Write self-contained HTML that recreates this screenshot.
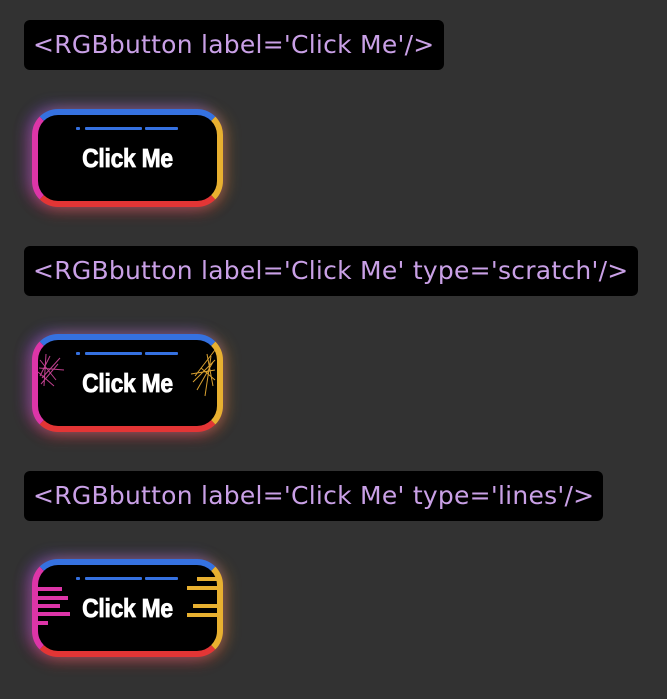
<!DOCTYPE html>
<html><head><style>
body{margin:0;background:#323232;width:667px;height:699px;position:relative;overflow:hidden;font-family:"Liberation Sans",sans-serif}
.code{position:absolute;left:24px;height:50px;background:#000;border-radius:6px;color:#c9a0e6;font-family:"DejaVu Sans",sans-serif;font-size:25px;line-height:50px;padding:0 9px;white-space:nowrap;letter-spacing:0.25px}
.btn{position:absolute;left:32px;width:191px;height:98px;box-sizing:border-box;border-radius:26px;border:6px solid;border-color:#3571e0 #e8b030 #e33535 #dd35a8;background:#000;box-shadow:-4px -4px 14px rgba(80,100,255,.3),5px 0 14px rgba(230,170,50,.3),0 6px 14px rgba(230,50,50,.3),-6px 0 14px rgba(220,50,170,.3)}
.d{position:absolute;top:12px;height:3px;background:#3571e0;border-radius:1px}
.t{position:absolute;left:0;right:0;top:28px;text-align:center;color:#fff;font-weight:bold;font-size:26px;transform:scaleX(.88);-webkit-text-stroke:0.8px #fff;letter-spacing:-0.3px}
.l{position:absolute;height:4px}
</style></head><body>
<div class="code" style="top:20px">&lt;RGBbutton label='Click Me'/&gt;</div>
<div class="code" style="top:246px">&lt;RGBbutton label='Click Me' type='scratch'/&gt;</div>
<div class="code" style="top:471px">&lt;RGBbutton label='Click Me' type='lines'/&gt;</div>

<div class="btn" style="top:109px"><div class="d" style="left:38px;width:4px"></div><div class="d" style="left:47px;width:57px"></div><div class="d" style="left:107px;width:33px"></div><div class="t">Click Me</div></div>

<div class="btn" style="top:334px"><div class="d" style="left:38px;width:4px"></div><div class="d" style="left:47px;width:57px"></div><div class="d" style="left:107px;width:33px"></div><div class="t">Click Me</div>
<svg style="position:absolute;left:0;top:10px" width="30" height="50" stroke="#c0408f" stroke-width="1"><path d="M2 10L18 30M4 28L22 8M1 18L26 20M8 4L6 36M3 34L20 14M12 6L2 26M0 22L16 36"/></svg>
<svg style="position:absolute;right:0;top:6px" width="30" height="56" stroke="#d8a030" stroke-width="1"><path d="M28 4L8 30M24 10L18 50M4 28L28 24M26 16L10 44M20 8L26 40M6 36L28 14M14 22L28 34"/></svg>
</div>

<div class="btn" style="top:559px"><div class="d" style="left:38px;width:4px"></div><div class="d" style="left:47px;width:57px"></div><div class="d" style="left:107px;width:33px"></div><div class="t">Click Me</div>
<div class="l" style="background:#dd35a8;left:0;top:22px;width:24px"></div>
<div class="l" style="background:#dd35a8;left:0;top:31px;width:30px"></div>
<div class="l" style="background:#dd35a8;left:0;top:39px;width:22px"></div>
<div class="l" style="background:#dd35a8;left:0;top:47px;width:32px"></div>
<div class="l" style="background:#dd35a8;left:0;top:56px;width:10px"></div>
<div class="l" style="background:#e8b030;right:0;top:12px;width:20px"></div>
<div class="l" style="background:#e8b030;right:0;top:21px;width:30px"></div>
<div class="l" style="background:#e8b030;right:0;top:39px;width:24px"></div>
<div class="l" style="background:#e8b030;right:0;top:48px;width:30px"></div>
</div>
</body></html>
